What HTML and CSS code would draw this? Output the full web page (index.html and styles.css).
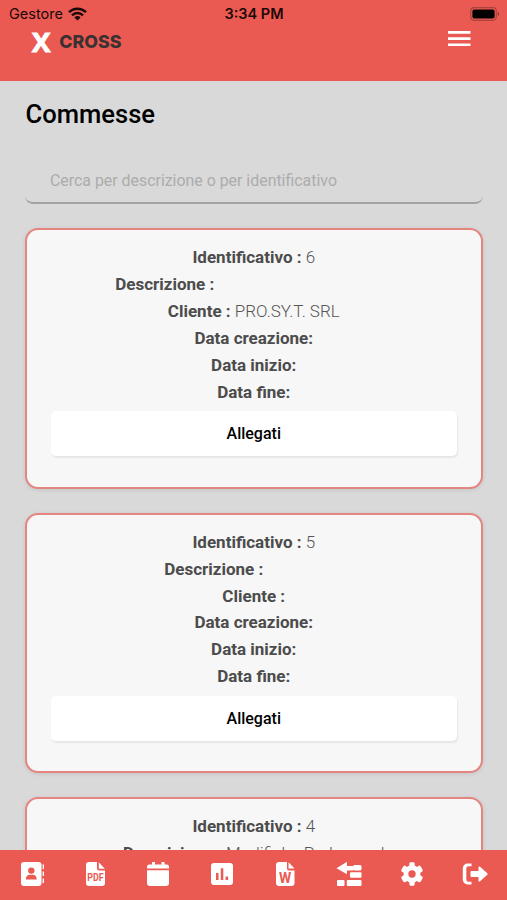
FILE: index.html
```html
<!DOCTYPE html>
<html lang="it">
<head>
    <meta charset="UTF-8">
    <meta name="viewport" content="width=device-width, initial-scale=1.0">
    <title>Commesse</title>
    <link rel="stylesheet" href="styles.css">
</head>
<body>

    <!-- Header -->
    <header>
        <div class="status-bar">
            <div class="carrier">
                <span>Gestore</span>
                <svg width="19" height="14" viewBox="0 0 19 14" fill="none" stroke="#1c0808" stroke-width="2.5">
                    <path d="M1 5.1a12.2 12.2 0 0 1 17 0M4 8.3a8 8 0 0 1 11 0"/>
                    <path d="M9.500 13.500L6.400 10.400a4.400 4.400 0 0 1 6.200 0z" fill="#1c0808" stroke="none"/>
                </svg>
            </div>
            <div class="time">3:34 PM</div>
            <svg class="battery" width="30" height="14" viewBox="0 0 30 14">
                <rect x=".7" y=".7" width="25.600" height="12.600" rx="3.500" fill="none" stroke="#a8443e" stroke-width="1.200"/>
                <rect x="2.400" y="2.400" width="22.200" height="9.200" rx="2" fill="#000"/>
                <path d="M27.800 4.800v4.400c1.800-.8 1.800-3.600 0-4.400z" fill="#8d3833"/>
            </svg>
        </div>
        <div class="navbar">
            <div class="brand">
                <span class="brand-x">X</span>
                <span class="brand-name">CROSS</span>
            </div>
            <svg class="menu" width="24" height="16" viewBox="0 0 24 16" fill="#fff">
                <path d="M1 0h22.500v2.700H1zM1 6.200h22.500v2.700H1zM1 12.400h22.500v2.700H1z"/>
            </svg>
        </div>
    </header>

    <!-- Elenco commesse -->
    <main>
        <h1>Commesse</h1>
        <input class="search" type="text" placeholder="Cerca per descrizione o per identificativo">

        <section class="card">
            <p><b>Identificativo :</b> 6</p>
            <p><b>Descrizione :</b><span class="empty-long"></span></p>
            <p><b>Cliente :</b> PRO.SY.T. SRL</p>
            <p><b>Data creazione:</b></p>
            <p><b>Data inizio:</b></p>
            <p><b>Data fine:</b></p>
            <button>Allegati</button>
        </section>

        <section class="card">
            <p><b>Identificativo :</b> 5</p>
            <p><b>Descrizione :</b><span class="empty-short"></span></p>
            <p><b>Cliente :</b></p>
            <p><b>Data creazione:</b></p>
            <p><b>Data inizio:</b></p>
            <p><b>Data fine:</b></p>
            <button>Allegati</button>
        </section>

        <section class="card">
            <p><b>Identificativo :</b> 4</p>
            <p><b>Descrizione :</b> Modifiche Parlamend</p>
        </section>
    </main>

    <!-- Menu in basso -->
    <footer>
        <a href="#"><svg viewBox="0 0 26 26">
            <rect x="2" y="1" width="20.500" height="24" rx="3"/>
            <path d="M23.600 3.500H25V8h-1.400zM23.600 10.500H25V15h-1.400zM23.600 17.500H25V22h-1.400z"/>
            <circle class="cut" cx="12.300" cy="9.600" r="3.200"/>
            <path class="cut" d="M6.800 18.500c0-3 1.700-4.700 4-4.700h3c2.300 0 4 1.700 4 4.700z"/>
        </svg></a>
        <a href="#"><svg viewBox="0 0 26 26">
            <path d="M7 1h8v6.500a2 2 0 0 0 2 2h6V22a3 3 0 0 1-3 3H7a3 3 0 0 1-3-3V4a3 3 0 0 1 3-3z"/>
            <path d="M16.800 1.200L22.800 7.700h-6z"/>
            <text class="cut" x="13.500" y="19.600" font-size="10.500" textLength="16.500" lengthAdjust="spacingAndGlyphs">PDF</text>
        </svg></a>
        <a href="#"><svg viewBox="0 0 26 26">
            <path d="M2 7.500V6a2.500 2.500 0 0 1 2.500-2.500H7V1h3v2.500h6.500V1h3v2.500H21.500A2.500 2.500 0 0 1 24 6v1.500zM2 9.300h22V22a3 3 0 0 1-3 3H5a3 3 0 0 1-3-3z"/>
        </svg></a>
        <a href="#"><svg viewBox="0 0 26 26">
            <rect x="2" y="2" width="22" height="22" rx="3"/>
            <path class="cut" d="M7 12h2.500v7H7zM11.800 7.200h2.500V19h-2.500zM16.600 15.400h2.500V19h-2.500z"/>
        </svg></a>
        <a href="#"><svg viewBox="0 0 26 26">
            <path d="M7 1h8v6.500a2 2 0 0 0 2 2h5.500V22a3 3 0 0 1-3 3H7a3 3 0 0 1-3-3V4a3 3 0 0 1 3-3z"/>
            <path d="M16.500 1.200L22.500 7.500h-6z"/>
            <text class="cut" x="13.200" y="21.500" font-size="14">W</text>
        </svg></a>
        <a href="#"><svg viewBox="0 0 26 26">
            <path d="M.5 7.200L11 .8v4.200h6v4.500h-6v3.700z"/>
            <rect x="17" y="4" width="8.500" height="5.500" rx="1.500"/>
            <rect x="14" y="11.300" width="11.500" height="5.500" rx="1"/>
            <rect x="1" y="19" width="7.500" height="6" rx="1"/>
            <rect x="10.800" y="19" width="14.700" height="6" rx="1"/>
        </svg></a>
        <a href="#"><svg class="gear" viewBox="0 0 24 24">
            <path fill-rule="evenodd" d="M22.200 14.400l-1.900-1.100a8.600 8.600 0 0 0 0-2.600l1.900-1.100c.5-.3.700-.9.500-1.400a11 11 0 0 0-2.400-4.200 1.200 1.200 0 0 0-1.500-.2l-1.900 1.100a8.500 8.500 0 0 0-2.300-1.300V1.400c0-.6-.4-1-1-1.100a11.300 11.300 0 0 0-3.200 0c-.6.100-1 .5-1 1.100v2.200a8.500 8.500 0 0 0-2.300 1.300L5.200 3.800a1.200 1.200 0 0 0-1.500.2 11 11 0 0 0-2.400 4.200c-.2.500 0 1.100.5 1.400l1.900 1.100a8.600 8.600 0 0 0 0 2.600l-1.900 1.100c-.5.300-.7.900-.5 1.400a11 11 0 0 0 2.400 4.200c.4.400 1 .5 1.500.2l1.900-1.100a8.500 8.500 0 0 0 2.300 1.300v2.200c0 .6.400 1 1 1.100a11.300 11.300 0 0 0 3.200 0c.6-.1 1-.5 1-1.100v-2.200a8.500 8.500 0 0 0 2.300-1.300l1.900 1.100c.5.300 1.100.2 1.500-.2a11 11 0 0 0 2.400-4.200c.2-.5 0-1.100-.5-1.400zM12 15.700a3.700 3.700 0 1 1 0-7.400 3.700 3.700 0 0 1 0 7.400z"/>
        </svg></a>
        <a href="#"><svg viewBox="0 0 26 26">
            <path d="M9.500 2.500V5.300H6.500a2.200 2.200 0 0 0-2.200 2.200v11a2.200 2.200 0 0 0 2.200 2.200h3v2.800H5.500A4.700 4.700 0 0 1 .8 18.800V7.200a4.700 4.700 0 0 1 4.700-4.700z"/>
            <path d="M9.500 10h7V6.300c0-.9 1-1.200 1.600-.6l7.200 6.600a1 1 0 0 1 0 1.400l-7.200 6.600c-.6.600-1.600.3-1.600-.6V16h-7a1 1 0 0 1-1-1v-4a1 1 0 0 1 1-1z"/>
        </svg></a>
    </footer>

</body>
</html>
```

FILE: styles.css
```css
* {
    box-sizing: border-box;
}
body {
    display: flex;
    flex-direction: column;
    height: 900px;
    margin: 0;
    overflow: hidden;
    font-family: Roboto, sans-serif;
    background-color: #d9d9d9;
}
header {
    flex: none;
    height: 81px;
    background-color: #eb5a52;
}
.status-bar {
    display: grid;
    grid-template-columns: 1fr auto 1fr;
    align-items: center;
    height: 27px;
    padding: 0 7px 0 9px;
    font-family: Inter, sans-serif;
    font-size: 14.5px;
    color: #1c0808;
}
.carrier {
    display: flex;
    align-items: center;
    gap: 5px;
}
.time {
    padding-right: 1px;
    font-weight: 600;
    font-size: 14.5px;
}
.battery {
    justify-self: end;
}
.navbar {
    display: flex;
    align-items: center;
    justify-content: space-between;
    height: 27px;
    padding: 0 36px 2px 32px;
}
.menu {
    margin-bottom: 2px;
}
.brand {
    display: flex;
    align-items: center;
    gap: 9px;
    padding-top: 3px;
}
.brand-x {
    font-family: "Open Sans", sans-serif;
    font-size: 27.5px;
    font-weight: 700;
    line-height: 27px;
    color: #fff;
    -webkit-text-stroke: 1px #fff;
}
.brand-name {
    font-family: Inter, sans-serif;
    font-size: 17.8px;
    font-weight: 800;
    color: #3b3131;
}
main {
    display: flex;
    flex: 1;
    flex-direction: column;
    min-height: 0;
    padding: 18px 24.5px 0 25px;
    overflow: hidden;
}
h1 {
    flex: none;
    margin: 0 0 26px;
    padding-left: 0.5px;
    font-size: 25.6px;
    font-weight: 500;
    line-height: 31px;
    color: #000;
}
.search {
    flex: none;
    height: 48px;
    margin-bottom: 24px;
    padding: 3px 25px 0;
    border: 0;
    border-bottom: 2px solid #a2a4a3;
    border-radius: 8px;
    background: none;
    font-family: inherit;
    font-size: 15.9px;
}
.search::placeholder {
    color: #acacac;
}
.card {
    flex: none;
    height: 260.5px;
    margin-bottom: 24.200px;
    padding: 14px 24px 0;
    border: 2px solid #e58580;
    border-radius: 13px;
    background-color: #f7f7f7;
    box-shadow: 0 1px 4px rgba(0, 0, 0, 0.1);
    text-align: center;
}
.card p {
    margin: 0;
    font-size: 17px;
    font-weight: 300;
    line-height: 26.900px;
    color: #555;
}
.card b {
    font-weight: 700;
    color: #4c4c4c;
}
.empty-long {
    display: inline-block;
    width: 178px;
}
.empty-short {
    display: inline-block;
    width: 80px;
}
.card button {
    width: 100%;
    height: 45px;
    margin-top: 6px;
    border: 0;
    border-radius: 5px;
    background-color: #fff;
    box-shadow: 1px 2px 2px rgba(0, 0, 0, 0.07);
    font-family: inherit;
    font-size: 16px;
    font-weight: 500;
    color: #000;
}
footer {
    display: grid;
    flex: none;
    grid-template-columns: repeat(8, 1fr);
    align-items: center;
    height: 50px;
    background-color: #eb5a52;
}
footer a {
    display: flex;
    justify-content: center;
    padding-bottom: 2px;
}
footer svg {
    width: 26px;
    height: 26px;
    fill: #fff;
}
footer .gear {
    width: 24px;
    height: 26px;
}
footer .cut {
    fill: #eb5a52;
}
footer text {
    font-family: Roboto, sans-serif;
    font-weight: 700;
    text-anchor: middle;
}
```
